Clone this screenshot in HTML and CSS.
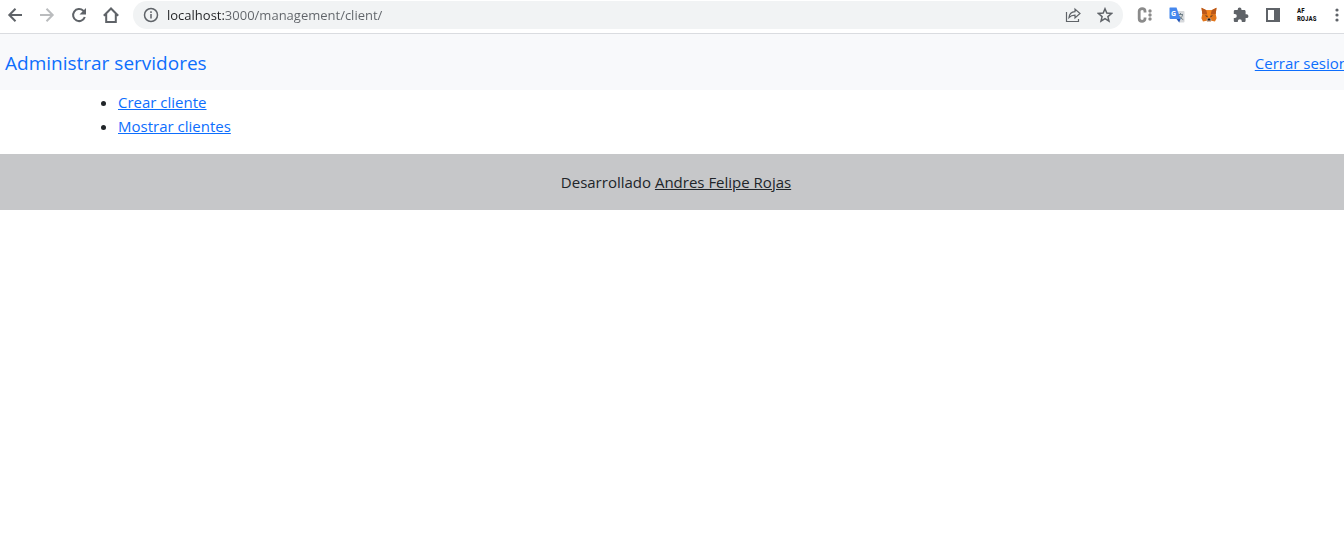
FILE: index.html
```html
<!DOCTYPE html>
<html lang="es">
<head>
<meta charset="utf-8">
<meta name="viewport" content="width=device-width, initial-scale=1">
<title>Administrar servidores</title>
<link rel="stylesheet" href="styles.css">
</head>
<body>
<header class="toolbar">
  <div class="nav-buttons">
    <button class="tool" type="button" aria-label="Atrás"><svg viewBox="0 0 16 16" class="line bold"><path d="M15 8H2.500M8.500 1.800 2.300 8l6.200 6.200"/></svg></button>
    <button class="tool" type="button" aria-label="Adelante" disabled><svg viewBox="0 0 16 16" class="line bold"><path d="M1 8h12.500M7.500 1.800 13.700 8l-6.200 6.200"/></svg></button>
    <button class="tool" type="button" aria-label="Recargar"><svg viewBox="0 0 16 16" class="line bold"><path d="M13.800 10A6 6 0 1 1 12.300 3.800L13.500 5"/><path class="solid" d="M15 1v6.500H8.500z"/></svg></button>
    <button class="tool" type="button" aria-label="Inicio"><svg viewBox="0 0 16 16" class="line bold"><path d="M.8 8.700 8 1.500l7.200 7.200M3.200 7v8h9.600V7"/></svg></button>
  </div>
  <div class="address">
    <button class="tool" type="button" aria-label="Información del sitio"><svg viewBox="0 0 16 16" class="line"><circle cx="8" cy="8" r="6.500"/><path d="M8 7v4.500M8 4.300v1.600"/></svg></button>
    <input class="url" type="text" aria-label="Dirección" value="localhost:3000/management/client/" spellcheck="false">
    <button class="tool" type="button" aria-label="Compartir"><svg viewBox="0 0 16 16" class="line thin"><path d="M1.500 5v9.500h12V12"/><path d="M4 10.500c.4-3.800 2.500-5.600 6-5.800V2l5 4.500-5 4.500V8.200c-2.700 0-4.500.6-6 2.300z"/></svg></button>
    <button class="tool" type="button" aria-label="Favoritos"><svg viewBox="0 0 16 16" class="line"><path d="m8 1.800 1.800 4.300 4.700.4-3.600 3.100 1.100 4.600L8 11.700l-4 2.500 1.100-4.600-3.600-3.100 4.700-.4z"/></svg></button>
  </div>
  <div class="extensions">
    <button class="tool" type="button" aria-label="Extensión C"><svg viewBox="0 0 16 16"><path d="M8 5.500V4.200C8 .8 2.200.8 2.200 4.200v7.600c0 3.400 5.800 3.400 5.800 0v-1.300" fill="none" stroke="#8b8b8b" stroke-width="2.800"/><g fill="#8b8b8b"><circle cx="13" cy="4" r="1.700"/><circle cx="13" cy="8" r="1.700"/><circle cx="13" cy="12" r="1.700"/></g></svg></button>
    <button class="tool" type="button" aria-label="Traductor"><svg viewBox="0 0 16 16"><path d="M7 4h7.500q1 0 1 1v9.500q0 1-1 1H10z" fill="#d7d9dc"/><path d="M9 7.500h5M11.500 6v1.500M13.500 8c-.5 2-1.800 3.500-3.500 4.500M10.500 9c.8 1.700 2 2.800 3.800 3.700" fill="none" stroke="#6f8088"/><path d="M1 .5h6.500L11.500 12H1.500q-1 0-1-1V1q0-.5.5-.5z" fill="#4587ed"/><path d="m7.500 12 2.700 3.500L11.500 12z" fill="#2457b8"/><text x="2" y="9" class="glyph">G</text></svg></button>
    <button class="tool" type="button" aria-label="MetaMask"><svg viewBox="0 0 16 16"><path d="m.5.8 5 2.400h5l5-2.400-.8 6.200.9 4.300-1.600 3.300-3.500-.9-1.500 1.200H7l-1.500-1.200-3.500.9L.4 11.300 1.300 7z" fill="#e2761b"/><path d="m.5.8 5 2.400.7 4L1.300 7zM15.500.8l-5 2.400-.7 4 4.900-.2z" fill="#b9581a"/><path d="m5.500 3.200.7 4L8 12l1.800-4.800.7-4z" fill="#f6851b"/><path d="m3.700 8.500 2.600.2.300 1.500zM12.300 8.500l-2.600.2-.3 1.500z" fill="#3c302a"/><path d="m6 11.500-.5 2.200L7 14.900h2l1.500-1.200-.5-2.200z" fill="#d5bfb2"/><path d="M6.800 11.500h2.400l.4 1.900H6.400z" fill="#161616"/></svg></button>
    <button class="tool" type="button" aria-label="Extensiones"><svg viewBox="0 0 16 16"><path d="M13.600 7.300h-1V4.500c0-.8-.6-1.400-1.400-1.400H8.500V2.400a1.900 1.900 0 0 0-3.800 0v.7H2.100C1.300 3.100.8 3.700.8 4.500V7h1a2 2 0 0 1 0 4h-1v2.700c0 .8.600 1.400 1.300 1.400h2.700v-.8a2 2 0 0 1 4 0v.8h2.400c.8 0 1.400-.6 1.400-1.400V11h1a1.850 1.850 0 0 0 0-3.700z" fill="#5f6368"/></svg></button>
    <button class="tool" type="button" aria-label="Panel lateral"><svg viewBox="0 0 16 16"><path d="M1 1h14v14H1zM3 3v10h6V3z" fill="#5f6368" fill-rule="evenodd"/></svg></button>
    <button class="tool profile" type="button" aria-label="Perfil"><span>AF</span><span>ROJAS</span></button>
    <button class="tool" type="button" aria-label="Menú"><svg viewBox="0 0 16 16" fill="#5f6368"><circle cx="8" cy="3" r="1.600"/><circle cx="8" cy="8" r="1.600"/><circle cx="8" cy="13" r="1.600"/></svg></button>
  </div>
</header>
<div class="page">
  <nav class="navbar">
    <a class="brand" href="#">Administrar servidores</a>
    <a class="link" href="#">Cerrar sesion</a>
  </nav>
  <main class="container">
    <ul class="menu">
      <li><a class="link" href="#">Crear cliente</a></li>
      <li><a class="link" href="#">Mostrar clientes</a></li>
    </ul>
  </main>
  <footer class="footer">Desarrollado <a class="author" href="#">Andres Felipe Rojas</a></footer>
</div>
</body>
</html>
```

FILE: styles.css
```css
* {
  box-sizing: border-box;
}

body {
  margin: 0;
  overflow-x: hidden;
  background: #fff;
  color: #212529;
  font: 15px/24px "Segoe UI", "Open Sans", "Noto Sans", sans-serif;
}

.toolbar {
  display: flex;
  align-items: center;
  height: 34px;
  padding-bottom: 3px;
  border-bottom: 1px solid #dadce0;
}

.nav-buttons,
.extensions {
  display: flex;
  flex: none;
  gap: 16px;
}

.nav-buttons {
  padding: 0 14px 0 7px;
}

.extensions {
  margin-right: -1px;
  padding-left: 14px;
}

.tool {
  flex: none;
  width: 16px;
  height: 16px;
  padding: 0;
  border: 0;
  background: none;
  color: #5f6368;
}

.tool:disabled {
  color: #babcbe;
}

.tool svg {
  display: block;
  width: 100%;
  height: 100%;
}

.line {
  fill: none;
  stroke: currentColor;
  stroke-width: 1.5;
}

.bold {
  stroke-width: 2;
}

.thin {
  stroke-width: 1.2;
}

.solid {
  fill: currentColor;
  stroke: none;
}

.glyph {
  fill: #fff;
  font: bold 7px "Open Sans", sans-serif;
}

.address {
  display: flex;
  flex: 1;
  align-items: center;
  gap: 16px;
  min-width: 0;
  height: 28px;
  padding: 0 10px;
  border-radius: 14px;
  background: #f1f3f4;
}

.url {
  flex: 1;
  min-width: 0;
  margin-left: -8px;
  padding: 0;
  border: 0;
  outline: 0;
  background: linear-gradient(to right, #202124 57px, #5f6368 57px);
  background-clip: text;
  -webkit-background-clip: text;
  color: transparent;
  font: 13px/20px "Segoe UI", "Open Sans", "Noto Sans", sans-serif;
}

.profile {
  display: flex;
  flex-direction: column;
  align-items: flex-start;
  justify-content: center;
  width: 20px;
  margin: 0 -4px 0 0;
  color: #111;
  font: bold 7px/8px "Roboto Condensed", Roboto, sans-serif;
}

.page {
  margin-right: -8px;
}

.navbar {
  display: flex;
  align-items: center;
  justify-content: space-between;
  padding: 17px 4px 15px 5px;
  background: #f8f9fb;
}

.brand {
  color: #0d6efd;
  font-size: 19px;
  text-decoration: none;
}

.link {
  color: #0d6efd;
}

.container {
  padding: 0 86px;
}

.menu {
  margin: 0 0 16px;
  padding-left: 32px;
}

.footer {
  padding: 16px;
  background: #c6c7c9;
  text-align: center;
}

.author {
  color: #212529;
}
```
